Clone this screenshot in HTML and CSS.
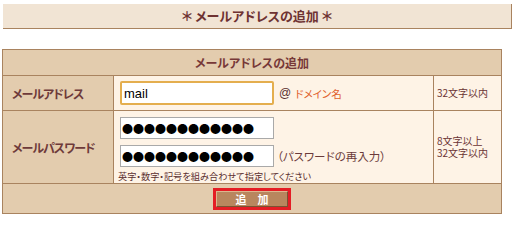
FILE: index.html
```html
<!DOCTYPE html>
<html lang="ja">
<head>
<meta charset="utf-8">
<title>メールアドレスの追加</title>
<link rel="stylesheet" href="styles.css">
</head>
<body>
<div class="pagetitle">＊ メールアドレスの追加 ＊</div>
<form class="form">
  <div class="caption">メールアドレスの追加</div>

  <div class="label">メールアドレス</div>
  <div class="value row1">
    <input class="field focus" type="text" value="mail">
    <span class="at">@</span><span class="domain">ドメイン名</span>
  </div>
  <div class="note">32文字以内</div>

  <div class="label">メールパスワード</div>
  <div class="value row2">
    <div class="line"><input class="field pw" type="text" value="●●●●●●●●●●●●"></div>
    <div class="line line2"><input class="field pw" type="text" value="●●●●●●●●●●●●"><span class="again">（パスワードの再入力）</span></div>
    <div class="hint">英字・数字・記号を組み合わせて指定してください</div>
  </div>
  <div class="note">8文字以上<br>32文字以内</div>

  <div class="actions"><button type="button" class="btn">追　加</button></div>
</form>
</body>
</html>
```

FILE: styles.css
```css
html, body {
  margin: 0;
  padding: 0;
  background: #ffffff;
}
body {
  font-family: "Noto Sans CJK JP", "Noto Sans", sans-serif;
  font-feature-settings: "palt";
  color: #6b3434;
}
.pagetitle {
  margin: 4px 2px 0 3px;
  height: 24px;
  line-height: 24px;
  background: #f1e4d4;
  border-right: 1px solid #a9835f;
  border-bottom: 1px solid #a9835f;
  text-align: center;
  font-size: 13px;
  font-weight: bold;
  color: #6e3232;
}
.form {
  margin: 20px 0 0 2px;
  width: 498px;
  border: 1px solid #a9835f;
  background: #a9835f;
  display: grid;
  grid-template-columns: 110px 319px 67px;
  grid-template-rows: 25px 34px 72px 29px;
  gap: 1px;
}
.caption {
  grid-column: 1 / -1;
  background: #e3ccae;
  text-align: center;
  line-height: 25px;
  font-size: 12px;
  font-weight: bold;
  color: #773838;
}
.label {
  background: #e3ccae;
  display: flex;
  align-items: center;
  padding-left: 9px;
  font-size: 12px;
  letter-spacing: -1px;
  font-weight: bold;
  color: #6e3a3a;
}
.value {
  background: #fef3e6;
  padding-left: 4px;
}
.row1 {
  display: flex;
  align-items: center;
}
.field {
  box-sizing: border-box;
  width: 154px;
  margin: 0 0 0 2px;
  background: #ffffff;
  color: #000000;
  outline: none;
}
.focus {
  height: 24px;
  border: 2px solid #e4ae4e;
  border-radius: 2px;
  padding: 0 2px;
  font-family: "Liberation Sans", Arial, sans-serif;
  font-size: 13px;
}
.at {
  margin-left: 5px;
  font-family: "Liberation Sans", Arial, sans-serif;
  font-size: 12px;
  color: #5a3030;
}
.domain {
  margin-left: 4px;
  font-size: 10.5px;
  color: #e0602a;
}
.row2 {
  padding-top: 6px;
}
.line {
  display: flex;
  align-items: center;
}
.line2 {
  margin-top: 6px;
}
.pw {
  height: 22px;
  border: 1px solid #a9a9a9;
  padding: 0 1px;
  font-family: "Noto Sans CJK JP", sans-serif;
  font-size: 11px;
  line-height: 20px;
  font-feature-settings: normal;
}
.again {
  margin-left: 3px;
  font-size: 11.5px;
  color: #6b3a3a;
}
.hint {
  margin-top: 3px;
  font-size: 9.2px;
  line-height: 12px;
  color: #5a2e2e;
}
.note {
  background: #fef3e6;
  display: flex;
  align-items: center;
  padding-left: 3px;
  font-size: 10px;
  line-height: 12px;
  color: #6b3434;
}
.actions {
  grid-column: 1 / -1;
  background: #e3ccae;
  display: flex;
  align-items: center;
  justify-content: center;
}
.btn {
  box-sizing: border-box;
  width: 72px;
  height: 16px;
  margin: 0;
  padding: 0;
  background: #b8865e;
  border: 1px solid;
  border-color: #dcb68e #7a5232 #7a5232 #dcb68e;
  outline: 3px solid #e41d25;
  font-family: "Noto Sans CJK JP", sans-serif;
  font-size: 11px;
  font-weight: bold;
  line-height: 14px;
  color: #ffffff;
}
```
